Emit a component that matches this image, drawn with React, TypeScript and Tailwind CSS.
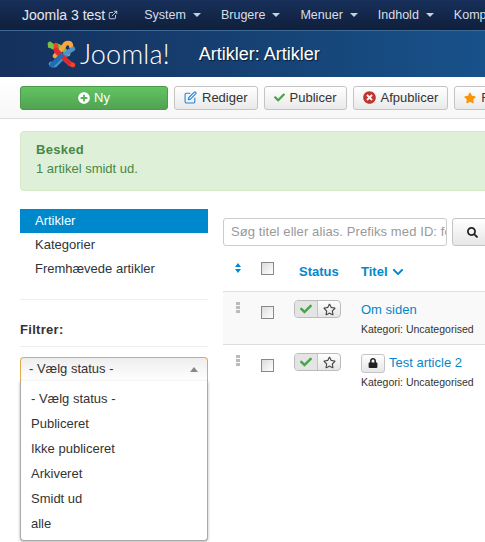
import { ExternalLink } from "lucide-react";
import { FaPlusCircle, FaCheck, FaTimesCircle, FaStar, FaRegStar, FaLock, FaSearch, FaChevronDown } from "react-icons/fa";
import { FiEdit } from "react-icons/fi";

const navItems = ["System", "Brugere", "Menuer", "Indhold", "Komponenter"];
const statusOptions = ["- Vælg status -", "Publiceret", "Ikke publiceret", "Arkiveret", "Smidt ud", "alle"];

function Caret() {
  return <span className="ml-[7px] inline-block border-x-[4px] border-t-[4px] border-x-transparent border-t-[#c8d0da]" />;
}

function JoomlaMark() {
  return (
    <svg width="30" height="31" viewBox="0 0 30 31" fill="none" strokeLinecap="round" strokeWidth="4.6">
      <path d="M6 8 L3 5 M3 7 L10 7 Q13 7 16 10 L21 15" stroke="#7ac143" />
      <path d="M24 7 Q24 4 21 4 Q18 4 17 7 L11 14 L8 17" stroke="#f9a541" />
      <path d="M9 6 L9 10 Q9 13 12 15 L21 23 Q23 25 26 26" stroke="#f44321" />
      <path d="M4 25 Q7 28 10 24 L20 14 Q22 12 26 10" stroke="#5091cd" />
      <path d="M9 11 L22 24" stroke="#e2282f" />
      <path d="M5 26 L14 17" stroke="#1c6fb5" />
    </svg>
  );
}

function ToolbarButton({ icon, label }: { icon: React.ReactNode; label: string }) {
  return (
    <button className="flex h-[24px] shrink-0 items-center gap-[5px] rounded-[3px] border border-[#c4c4c4] bg-gradient-to-b from-white to-[#e9e9e9] px-[9px] text-[13px] text-[#333]">
      {icon}
      {label}
    </button>
  );
}

function StatusToggle() {
  return (
    <div className="flex h-[18px] w-[47px] rounded-[4px] border border-[#bbb] bg-gradient-to-b from-white to-[#e6e6e6]">
      <div className="flex w-[23px] items-center justify-center rounded-l-[3px] border-r border-[#c4c4c4] bg-[#e4e4e4]">
        <FaCheck className="text-[12px] text-[#46a546]" />
      </div>
      <div className="flex flex-1 items-center justify-center">
        <FaRegStar className="text-[13px] text-[#444]" />
      </div>
    </div>
  );
}

function Checkbox() {
  return <span className="block h-[13px] w-[13px] border border-[#888] bg-gradient-to-br from-[#dcdcdc] to-white" />;
}

function DragHandle() {
  return (
    <div className="flex flex-col gap-[1px]">
      <span className="h-[3px] w-[4px] bg-[#bbb]" />
      <span className="h-[3px] w-[4px] bg-[#bbb]" />
      <span className="h-[3px] w-[4px] bg-[#bbb]" />
    </div>
  );
}

function Row({ striped, title, locked }: { striped?: boolean; title: string; locked?: boolean }) {
  return (
    <div className={`flex h-[53px] w-[262px] border-t border-[#ddd] pt-[8px] ${striped ? "bg-[#f9f9f9]" : ""}`}>
      <div className="w-[37px] pl-[13px] pt-[2px]">
        <DragHandle />
      </div>
      <div className="w-[34px] pt-[6px] pl-[1px]">
        <Checkbox />
      </div>
      <div className="w-[67px]">
        <StatusToggle />
      </div>
      <div className="flex-1">
        <div className="flex h-[20px] items-center gap-[4px]">
          {locked && (
            <span className="flex h-[19px] w-[24px] items-center justify-center rounded-[3px] border border-[#c4c4c4] bg-gradient-to-b from-white to-[#e6e6e6]">
              <FaLock className="text-[10px] text-[#222]" />
            </span>
          )}
          <a className="text-[13px] text-[#0088cc]">{title}</a>
        </div>
        <p className="mt-[2px] whitespace-nowrap text-[10.5px] text-[#333]">Kategori: Uncategorised</p>
      </div>
    </div>
  );
}

export default function App() {
  return (
    <div className="h-[542px] w-[485px] overflow-hidden bg-white font-['Liberation_Sans',Arial,sans-serif] text-[13px] text-[#333]">
      {/* Top nav */}
      <nav className="flex h-[30px] items-center whitespace-nowrap bg-gradient-to-b from-[#17305a] to-[#101f3c] text-[#d8dee8]">
        <span className="ml-[22px] flex items-center gap-[3px] text-[14px] text-[#e4e8ee]">
          Joomla 3 test
          <ExternalLink size={10} strokeWidth={2} />
        </span>
        <div className="ml-[26px] flex items-center gap-[20px] text-[12.5px]">
          {navItems.map((item) => (
            <span key={item} className="flex items-center">
              {item}
              <Caret />
            </span>
          ))}
        </div>
      </nav>

      {/* Title bar */}
      <header className="flex h-[47px] items-center border-t border-[#3a6a96] bg-gradient-to-r from-[#14305c] to-[#17528a] pl-[47px]">
        <JoomlaMark />
        <span className="ml-[3px] font-['Lato',sans-serif] text-[27px] font-light tracking-[0.2px] text-white">Joomla!</span>
        <h1 className="ml-[29px] text-[18px] text-white [text-shadow:1px_1px_1px_rgba(0,0,0,0.6)]">Artikler: Artikler</h1>
      </header>

      {/* Toolbar */}
      <div className="flex h-[42px] items-center gap-[6px] overflow-hidden border-b border-[#ddd] bg-gradient-to-b from-white to-[#f7f7f7] pl-[20px]">
        <button className="flex h-[24px] w-[148px] shrink-0 items-center justify-center gap-[4px] rounded-[3px] border border-[#4a9a4a] bg-gradient-to-b from-[#62c462] to-[#51a351] text-[13px] text-white">
          <FaPlusCircle className="text-[12px]" />
          Ny
        </button>
        <ToolbarButton icon={<FiEdit className="text-[13px] text-[#2384d3]" />} label="Rediger" />
        <ToolbarButton icon={<FaCheck className="text-[11px] text-[#46a546]" />} label="Publicer" />
        <ToolbarButton icon={<FaTimesCircle className="text-[13px] text-[#bd362f]" />} label="Afpublicer" />
        <ToolbarButton icon={<FaStar className="text-[12px] text-[#f89406]" />} label="Fremhævet" />
      </div>

      {/* Message */}
      <div className="ml-[20px] mt-[12px] h-[60px] w-[500px] rounded-[4px] border border-[#d6e9c6] bg-[#dff0d8] px-[15px] py-[8px] text-[#468847]">
        <p className="text-[13px] font-bold tracking-[0.3px]">Besked</p>
        <p className="mt-[-1px]">1 artikel smidt ud.</p>
      </div>

      <div className="relative mt-[18px] flex">
        {/* Sidebar */}
        <aside className="ml-[20px] w-[188px] shrink-0">
          <div className="flex h-[24px] items-center bg-[#0088cc] pl-[15px] text-white">Artikler</div>
          <div className="flex h-[24px] items-center pl-[15px]">Kategorier</div>
          <div className="flex h-[24px] items-center pl-[15px]">Fremhævede artikler</div>
          <div className="mt-[18px] border-t border-[#eee]" />
          <p className="mt-[20px] text-[13px] font-bold tracking-[0.3px] text-[#333]">Filtrer:</p>
          <div className="mt-[6px] border-t border-[#eee]" />
          <div className="relative mt-[10px]">
            <div className="flex h-[24px] items-center justify-between rounded-t-[4px] border-x border-t border-[#e0a94c] bg-gradient-to-b from-[#eee] to-white px-[8px]">
              - Vælg status -
              <span className="mr-[1px] border-x-[4px] border-b-[5px] border-x-transparent border-b-[#888]" />
            </div>
            <ul className="absolute left-0 right-0 top-[24px] z-10 h-[160px] rounded-b-[4px] border border-t-0 border-[#aaa] bg-white pl-[10px] pt-[6px] shadow-[0_1px_3px_rgba(0,0,0,0.3)]">
              {statusOptions.map((opt) => (
                <li key={opt} className="flex h-[25px] items-center">
                  {opt}
                </li>
              ))}
            </ul>
            <div className="mt-[164px] h-[24px] rounded-[4px] border border-[#aaa] bg-gradient-to-b from-[#eee] to-white" />
          </div>
        </aside>

        {/* Articles */}
        <main className="ml-[15px] shrink-0 pt-[9px]">
          <div className="flex gap-[5px]">
            <div className="flex h-[28px] w-[224px] items-center overflow-hidden whitespace-nowrap rounded-[3px] border border-[#ccc] pl-[7px] text-[13px] tracking-[0.1px] text-[#999]">
              Søg titel eller alias. Prefiks med ID: for at søge
            </div>
            <button className="flex h-[28px] w-[40px] items-center justify-center rounded-[3px] border border-[#c4c4c4] bg-gradient-to-b from-white to-[#e6e6e6]">
              <FaSearch className="text-[11px] text-[#222]" />
            </button>
          </div>
          <div className="mt-[16px] flex h-[29px] w-[262px] items-start font-bold text-[#0088cc]">
            <div className="w-[38px] pl-[12px] pt-[1px] text-[8px] leading-[6px]">
              <span className="block border-x-[3.5px] border-b-[4px] border-x-transparent border-b-[#0088cc] w-0" />
              <span className="mt-[2px] block w-0 border-x-[3.5px] border-t-[4px] border-x-transparent border-t-[#0088cc]" />
            </div>
            <div className="w-[38px]">
              <Checkbox />
            </div>
            <div className="w-[62px] text-[13px]">Status</div>
            <div className="flex items-center gap-[4px]">
              Titel <FaChevronDown className="text-[12px]" />
            </div>
          </div>
          <Row striped title="Om siden" />
          <Row title="Test article 2" locked />
        </main>
      </div>
    </div>
  );
}
